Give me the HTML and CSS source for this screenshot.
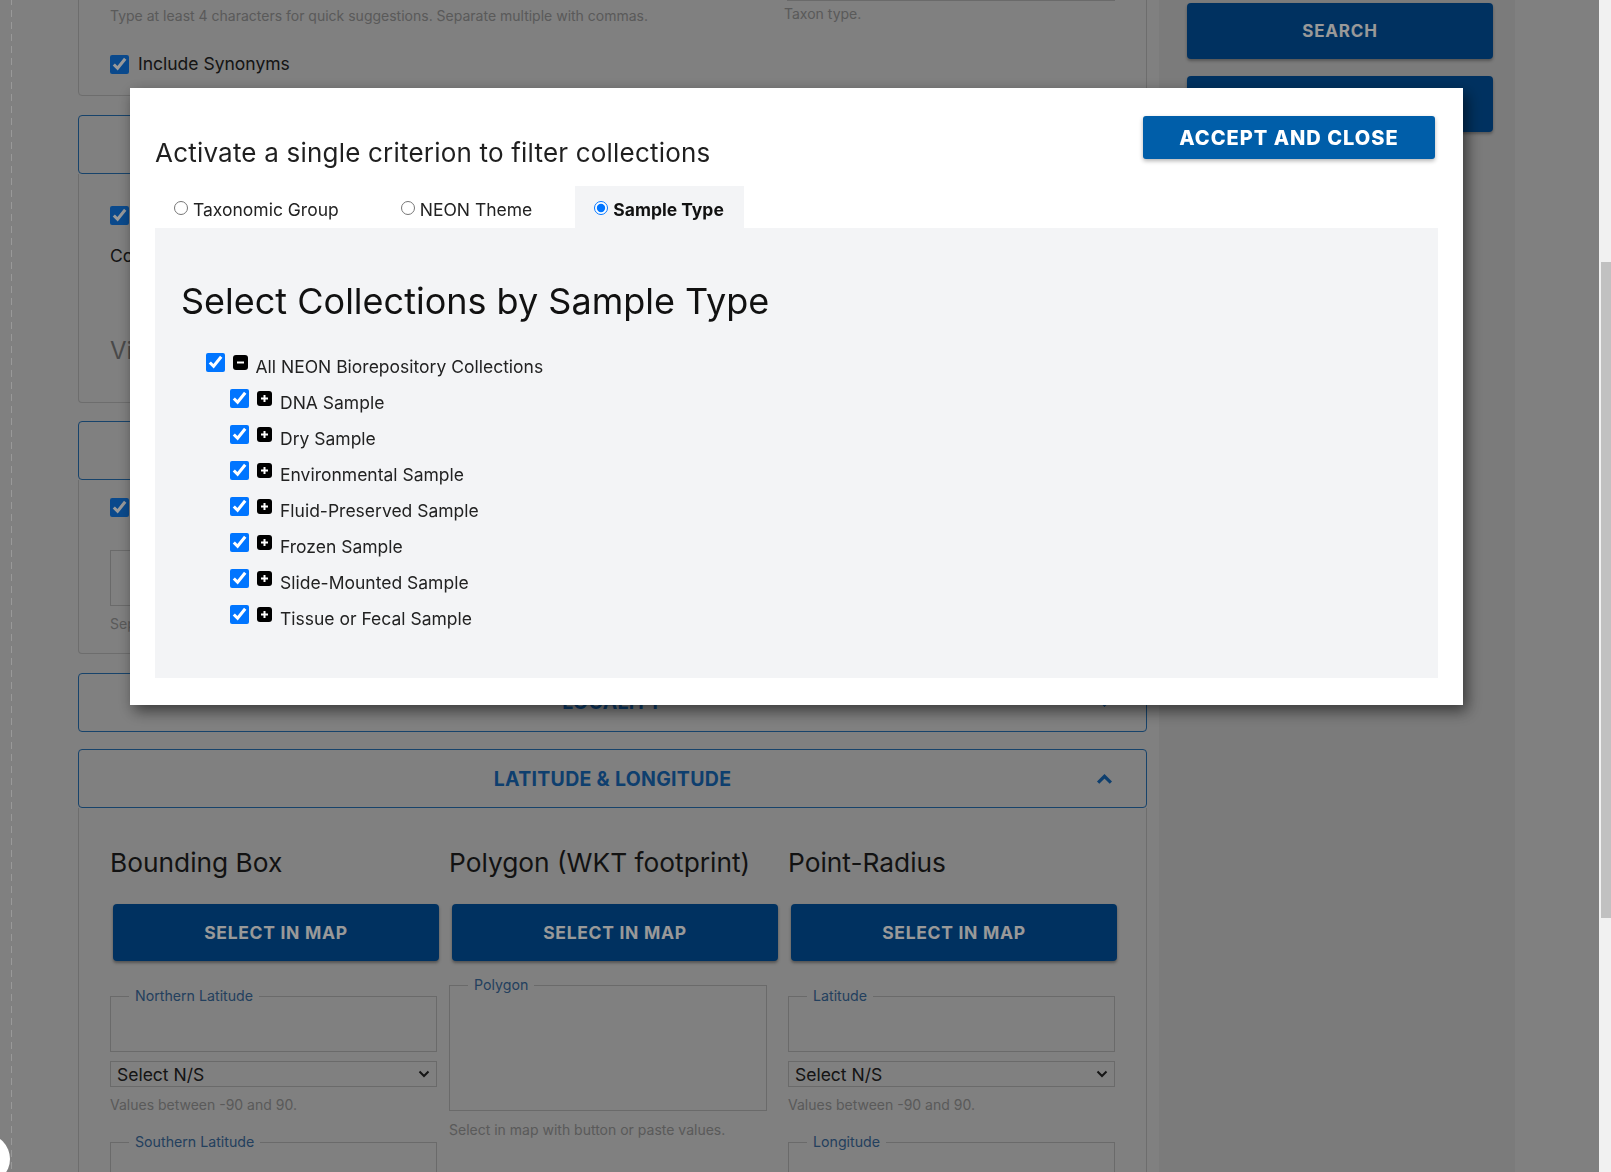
FILE: index.html
```html
<!DOCTYPE html>
<html lang="en">
<head>
<meta charset="utf-8">
<title>Collection search</title>
<link rel="stylesheet" href="styles.css">
</head>
<body>
<div class="page">
  <div class="gutter"><div class="rail"></div></div>

  <main class="main">
    <section class="card card-taxa">
      <div class="taxa-grid">
        <div class="taxa-col">
          <div class="input input-taxa"></div>
          <p class="help help-taxa">Type at least 4 characters for quick suggestions. Separate multiple with commas.</p>
          <label class="check check-syn"><input type="checkbox" checked> Include Synonyms</label>
        </div>
        <div class="taxa-col">
          <div class="input input-type"></div>
          <p class="help help-type">Taxon type.</p>
        </div>
      </div>
    </section>

    <section class="acc">
      <header class="acc-head"><span></span><span class="acc-title">COLLECTIONS</span><svg class="chev" viewBox="0 0 16 11"><polyline points="2,2 8,8 14,2"/></svg></header>
      <div class="acc-body body-coll">
        <label class="check"><input type="checkbox" checked> Show only collections with specimens</label>
        <p class="coll-line">Collections selected: All NEON Biorepository Collections</p>
        <p class="coll-view">View and modify selected collections</p>
      </div>
    </section>

    <section class="acc">
      <header class="acc-head"><span></span><span class="acc-title">CATALOG NUMBER</span><svg class="chev" viewBox="0 0 16 11"><polyline points="2,2 8,8 14,2"/></svg></header>
      <div class="acc-body body-cat">
        <label class="check"><input type="checkbox" checked> Include other catalog numbers</label>
        <div class="input input-cat"></div>
        <p class="help help-cat">Separate multiple with commas.</p>
      </div>
    </section>

    <section class="acc acc-loc">
      <header class="acc-head"><span></span><span class="acc-title">LOCALITY</span><svg class="chev" viewBox="0 0 16 11"><polyline points="2,2 8,8 14,2"/></svg></header>
    </section>

    <section class="acc acc-geo">
      <header class="acc-head"><span></span><span class="acc-title">LATITUDE &amp; LONGITUDE</span><svg class="chev" viewBox="0 0 16 11"><polyline points="2,9 8,3 14,9"/></svg></header>
      <div class="acc-body body-geo">
        <div class="geo-col">
          <h3 class="geo-title">Bounding Box</h3>
          <button class="btn-map">SELECT IN MAP</button>
          <fieldset class="field field-first"><legend>Northern Latitude</legend><div class="field-box"></div></fieldset>
          <div class="select"><span>Select N/S</span><svg viewBox="0 0 12 8"><polyline points="1.5,1.5 6,6 10.5,1.5"/></svg></div>
          <p class="help help-geo">Values between -90 and 90.</p>
          <fieldset class="field field-next"><legend>Southern Latitude</legend><div class="field-box"></div></fieldset>
        </div>
        <div class="geo-col">
          <h3 class="geo-title">Polygon (WKT footprint)</h3>
          <button class="btn-map">SELECT IN MAP</button>
          <fieldset class="field field-poly"><legend>Polygon</legend><div class="field-area"></div></fieldset>
          <p class="help help-poly">Select in map with button or paste values.</p>
        </div>
        <div class="geo-col">
          <h3 class="geo-title">Point-Radius</h3>
          <button class="btn-map">SELECT IN MAP</button>
          <fieldset class="field field-first"><legend>Latitude</legend><div class="field-box"></div></fieldset>
          <div class="select"><span>Select N/S</span><svg viewBox="0 0 12 8"><polyline points="1.5,1.5 6,6 10.5,1.5"/></svg></div>
          <p class="help help-geo">Values between -90 and 90.</p>
          <fieldset class="field field-next"><legend>Longitude</legend><div class="field-box"></div></fieldset>
        </div>
      </div>
    </section>
  </main>

  <aside class="side">
    <button class="btn-side">SEARCH</button>
    <button class="btn-side">RESET</button>
  </aside>
</div>

<div class="backdrop"></div>

<div class="modal" role="dialog" aria-modal="true">
  <div class="modal-head">
    <h2 class="modal-title">Activate a single criterion to filter collections</h2>
    <button class="btn-accept">ACCEPT AND CLOSE</button>
  </div>
  <div class="tabs">
    <label class="tab"><input type="radio" name="crit"> Taxonomic Group</label>
    <label class="tab"><input type="radio" name="crit"> NEON Theme</label>
    <label class="tab tab-active"><input type="radio" name="crit" checked> Sample Type</label>
  </div>
  <div class="panel">
    <h3 class="panel-title">Select Collections by Sample Type</h3>
    <ul class="tree">
      <li>
        <div class="node"><input type="checkbox" checked><svg class="tog" viewBox="0 0 15 15"><rect width="15" height="15" rx="3"/><path d="M4 7.5h7"/></svg><span>All NEON Biorepository Collections</span></div>
        <ul class="tree-sub">
          <li class="node"><input type="checkbox" checked><svg class="tog" viewBox="0 0 15 15"><rect width="15" height="15" rx="3"/><path d="M4 7.5h7M7.5 4v7"/></svg><span>DNA Sample</span></li>
          <li class="node"><input type="checkbox" checked><svg class="tog" viewBox="0 0 15 15"><rect width="15" height="15" rx="3"/><path d="M4 7.5h7M7.5 4v7"/></svg><span>Dry Sample</span></li>
          <li class="node"><input type="checkbox" checked><svg class="tog" viewBox="0 0 15 15"><rect width="15" height="15" rx="3"/><path d="M4 7.5h7M7.5 4v7"/></svg><span>Environmental Sample</span></li>
          <li class="node"><input type="checkbox" checked><svg class="tog" viewBox="0 0 15 15"><rect width="15" height="15" rx="3"/><path d="M4 7.5h7M7.5 4v7"/></svg><span>Fluid-Preserved Sample</span></li>
          <li class="node"><input type="checkbox" checked><svg class="tog" viewBox="0 0 15 15"><rect width="15" height="15" rx="3"/><path d="M4 7.5h7M7.5 4v7"/></svg><span>Frozen Sample</span></li>
          <li class="node"><input type="checkbox" checked><svg class="tog" viewBox="0 0 15 15"><rect width="15" height="15" rx="3"/><path d="M4 7.5h7M7.5 4v7"/></svg><span>Slide-Mounted Sample</span></li>
          <li class="node"><input type="checkbox" checked><svg class="tog" viewBox="0 0 15 15"><rect width="15" height="15" rx="3"/><path d="M4 7.5h7M7.5 4v7"/></svg><span>Tissue or Fecal Sample</span></li>
        </ul>
      </li>
    </ul>
  </div>
</div>

<div class="fab"></div>
<div class="scrollbar"><div class="scroll-thumb"></div></div>
</body>
</html>
```

FILE: styles.css
```css
* { box-sizing: border-box; }

html, body {
  margin: 0;
  height: 100%;
  overflow: hidden;
}

body {
  font-family: Inter, "Noto Sans", sans-serif;
  background: #d5d5d5;
  color: #232323;
}

button { font-family: inherit; }

/* ---------- page under the backdrop ---------- */
.page {
  display: flex;
  margin-top: -62px;
  min-height: 1400px;
}

.gutter {
  width: 78px;
  flex: none;
  padding-left: 11px;
}

.rail {
  width: 1px;
  height: 100%;
  background: repeating-linear-gradient(to bottom, #ffffff 0 7px, transparent 7px 12px);
}

.main {
  width: 1069px;
  flex: none;
}

.side {
  width: 356px;
  flex: none;
  margin-left: 12px;
  background: #cdcdcd;
  padding: 65px 22px 0 28px;
  display: flex;
  flex-direction: column;
  gap: 17px;
}

.btn-side {
  height: 56px;
  border: 0;
  border-radius: 4px;
  background: #0053a0;
  color: #fff;
  font-size: 17px;
  font-weight: 700;
  letter-spacing: 0.8px;
  box-shadow: 0 2px 3px rgba(0, 0, 0, 0.3);
}

.card {
  border: 1px solid #b6b6b6;
  border-radius: 0 0 4px 4px;
  padding: 20px 31px 21px;
}

.taxa-grid {
  display: grid;
  grid-template-columns: 631px 331px;
  column-gap: 43px;
}

.input {
  border: 1px solid #b1b1b1;
}

.input-taxa { height: 40px; }
.input-type { height: 42px; margin-left: 3px; }

.help {
  margin: 0;
  font-size: 14px;
  line-height: 20px;
  color: #969696;
}

.help-taxa { margin-top: 7px; }
.help-type { margin-top: 3px; }

.check {
  display: flex;
  align-items: center;
  gap: 9px;
  font-size: 17.5px;
  line-height: 20px;
  color: #232323;
}

.check input {
  width: 19px;
  height: 19px;
  margin: 0;
  accent-color: #127be9;
}

.check-syn { margin-top: 28px; }

.acc { margin-top: 18.5px; }
.acc-geo { margin-top: 17.5px; }

.acc-head {
  height: 59px;
  border: 1px solid #2770b2;
  border-radius: 4px;
  display: grid;
  grid-template-columns: 1fr auto 1fr;
  align-items: center;
  padding: 0 33px;
}

.acc-title {
  font-size: 19.5px;
  font-weight: 700;
  color: #1869b8;
  letter-spacing: 0.3px;
}

.chev {
  justify-self: end;
  width: 17px;
  height: 12px;
  fill: none;
  stroke: #1869b8;
  stroke-width: 3;
}

.acc-body {
  border: 1px solid #b6b6b6;
  border-top: 0;
  border-radius: 0 0 4px 4px;
  padding: 0 31px;
}

.body-coll { padding-top: 32px; padding-bottom: 36px; }

.coll-line {
  margin: 20px 0 0;
  font-size: 17.5px;
  line-height: 20px;
}

.coll-view {
  margin: 70px 0 0;
  font-size: 24px;
  line-height: 30px;
  color: #7b7b7b;
}

.body-cat { padding-top: 17px; padding-bottom: 19px; }

.input-cat {
  height: 56px;
  margin-top: 33px;
}

.help-cat { margin-top: 8px; }

.body-geo {
  display: grid;
  grid-template-columns: repeat(3, 1fr);
  column-gap: 12px;
  padding-top: 38px;
  padding-bottom: 40px;
}

.geo-title {
  margin: 0;
  font-size: 26.3px;
  font-weight: 400;
  line-height: 34px;
  color: #1f1f1f;
}

.btn-map {
  display: block;
  width: calc(100% - 1px);
  height: 57px;
  margin: 24px 0 0 3px;
  border: 0;
  border-radius: 4px;
  background: #0053a0;
  color: #fff;
  font-size: 17.5px;
  font-weight: 700;
  letter-spacing: 0.7px;
  box-shadow: 0 2px 3px rgba(0, 0, 0, 0.35);
}

.field {
  margin: 0;
  padding: 0;
  border: 1px solid #b1b1b1;
  min-width: 0;
}

.field legend {
  margin-left: 18px;
  padding: 0 6px;
  font-size: 14.2px;
  line-height: 14px;
  color: #3b6b9d;
}

.field-first { margin-top: 28px; }
.field-next { margin-top: 20px; }
.field-box { height: 48px; }

.field-poly {
  margin-top: 17px;
  width: 318px;
}

.field-area { height: 118px; }

.select {
  margin-top: 9px;
  height: 26px;
  border: 1px solid #b1b1b1;
  display: flex;
  align-items: center;
  justify-content: space-between;
  padding: 0 6px 0 6px;
  font-size: 17.5px;
  color: #232323;
}

.select svg {
  width: 12px;
  height: 8px;
  fill: none;
  stroke: #232323;
  stroke-width: 2;
}

.help-geo { margin-top: 8px; }
.help-poly { margin-top: 9px; }

/* ---------- backdrop ---------- */
.backdrop {
  position: fixed;
  inset: 0;
  background: rgba(0, 0, 0, 0.4);
}

/* ---------- modal ---------- */
.modal {
  position: fixed;
  left: 130px;
  top: 88px;
  width: 1333px;
  height: 617px;
  background: #fff;
  padding: 28px 25px 27px;
  box-shadow: 4px 6px 14px rgba(0, 0, 0, 0.55);
  color: #1f1f1f;
}

.modal-head {
  display: flex;
  justify-content: space-between;
  align-items: flex-start;
  height: 52px;
}

.modal-title {
  margin: 21px 0 0;
  font-size: 26px;
  font-weight: 400;
  line-height: 32px;
  letter-spacing: 0.2px;
  color: #1f1f1f;
}

.btn-accept {
  width: 292px;
  height: 43px;
  margin-right: 3px;
  border: 0;
  border-radius: 3px;
  background: #005ea9;
  color: #fff;
  font-size: 20px;
  font-weight: 800;
  letter-spacing: 1px;
  box-shadow: 0 2px 4px rgba(0, 0, 0, 0.3);
}

.tabs {
  display: flex;
  margin-top: 18px;
  height: 42px;
}

.tab {
  display: flex;
  align-items: center;
  gap: 5px;
  padding: 5px 20px 0 19px;
  margin-right: 23px;
  font-size: 17.5px;
  color: #222;
}

.tab input {
  width: 14px;
  height: 14px;
  margin: 0 0 3px;
  accent-color: #0075ff;
}

.tab-active {
  background: #f3f4f6;
  font-weight: 700;
  color: #111;
}

.panel {
  background: #f3f4f6;
  height: 450px;
  padding: 25px 26px;
}

.panel-title {
  margin: 26px 0 25px;
  font-size: 36px;
  font-weight: 400;
  line-height: 44px;
  color: #111;
}

.tree,
.tree-sub {
  list-style: none;
  margin: 0;
  padding: 0 0 0 24.5px;
}

.node {
  display: flex;
  align-items: center;
  height: 36px;
  font-size: 17.5px;
  color: #222;
}

.node input {
  width: 19px;
  height: 19px;
  margin: 0 8px 8px 0;
  accent-color: #0075ff;
}

.tog {
  width: 15px;
  height: 15px;
  margin: 0 8px 8px 0;
  flex: none;
}

.tog rect { fill: #000; }
.tog path { stroke: #fff; stroke-width: 2; fill: none; }

/* ---------- overlays ---------- */
.fab {
  position: fixed;
  left: -40px;
  top: 1134px;
  width: 50px;
  height: 50px;
  border-radius: 50%;
  background: #fff;
}

.scrollbar {
  position: fixed;
  top: 0;
  right: 0;
  width: 12px;
  height: 100%;
  background: #f1f1f1;
  padding: 262px 0 0 2px;
}

.scroll-thumb {
  height: 656px;
  background: #c1c1c1;
}
```
